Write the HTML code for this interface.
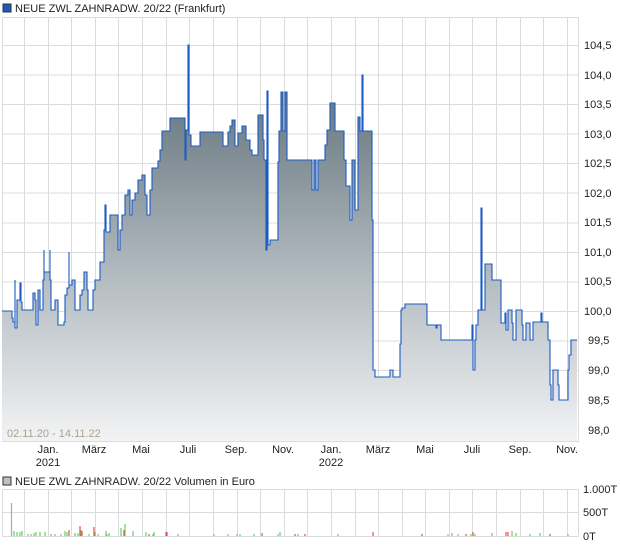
<!DOCTYPE html>
<html><head><meta charset="utf-8"><style>
body{margin:0;background:#fff;width:620px;height:546px;overflow:hidden;font-family:"Liberation Sans",sans-serif;}
svg{position:absolute;left:0;top:0}
text{font-family:"Liberation Sans",sans-serif;font-size:11px;fill:#222}
</style></head><body>
<svg width="620" height="546" viewBox="0 0 620 546">
<defs>
<linearGradient id="g" x1="0" y1="100" x2="0" y2="441" gradientUnits="userSpaceOnUse">
<stop offset="0" stop-color="#6a7981"/><stop offset="0.55" stop-color="#b7bfc4"/><stop offset="1" stop-color="#f2f3f5"/>
</linearGradient>
</defs>
<rect x="3" y="4" width="8" height="8" fill="#1c5bc4" stroke="#333" stroke-width="1"/>
<text x="15" y="12">NEUE ZWL ZAHNRADW. 20/22 (Frankfurt)</text>
<g stroke="#dcdcdc" stroke-width="1" fill="none">
<rect x="2.5" y="17.5" width="576" height="424"/>
<path d="M2 45.5H578M2 75H578M2 104.5H578M2 134H578M2 163.5H578M2 193H578M2 223H578M2 252.5H578M2 282H578M2 311.5H578M2 341H578M2 370.5H578M2 400H578M2 430H578"/>
<path d="M24.5 17V441M48.5 17V441M71.5 17V441M95.5 17V441M118.5 17V441M142.5 17V441M166.5 17V441M189.5 17V441M213.5 17V441M237.5 17V441M260.5 17V441M284.5 17V441M307.5 17V441M331.5 17V441M355.5 17V441M378.5 17V441M402.5 17V441M425.5 17V441M449.5 17V441M472.5 17V441M496.5 17V441M520.5 17V441M543.5 17V441M567.5 17V441"/>
</g>
<path fill="url(#g)" stroke="none" d="M2 441 V311 H12 V318 H13 V322 H15 V280 V328 H17 V300 H19 V300 H20 V283 H21 V302 H22 V310 H33 V293 H35 V300 H36 V325 H38 V290 H40 V310 H43 V280 H44 V250 V272 H50 V250 V280 H51 V310 H55 V300 H58 V325 H64 V322 H65 V295 H67 V288 H69 V252 V285 H72 V280 H75 V310 H80 V295 H82 V290 H84 V272 H87 V290 H88 V310 H93 V290 H95 V280 H100 V262 H104 V230 H105 V205 H106 V232 H110 V215 H115 V215 H118 V250 H120 V230 H122 V215 H125 V195 H128 V190 H130 V215 H132 V200 H135 V193 H138 V180 H142 V175 H145 V195 H147 V215 H150 V190 H152 V168 H158 V161 H160 V150 H162 V131 H170 V118 H172 V118 H185 V160 H186 V130 H188 V45 H189 V135 H191 V146 H192 V146 H200 V132 H223 V146 H228 V132 H230 V126 H232 V120 H235 V146 H238 V133 H242 V126 H246 V140 H250 V150 H252 V155 H258 V115 H263 V140 H264 V160 H266 V250 H267 V91 H268 V245 H270 V240 H278 V162 H279 V131 H281 V92 H283 V131 H285 V92 H287 V160 H312 V190 H314 V160 H316 V190 H318 V160 H325 V145 H327 V130 H330 V103 H335 V131 H338 V131 H344 V160 H346 V186 H350 V220 H352 V160 H355 V210 H358 V117 H360 V131 H362 V75 H363 V131 H372 V220 H373 V370 H375 V377 H377 V377 H390 V370 H393 V377 H400 V344 H401 V310 H402 V308 H405 V304 H412 V304 H427 V325 H428 V325 H436 V328 H437 V325 H441 V340 H458 V340 H472 V325 H473 V370 H475 V340 H476 V325 H478 V310 H481 V208 H482 V310 H485 V264 H488 V264 H492 V280 H497 V280 H501 V323 H505 V313 H506 V330 H508 V310 H512 V323 H513 V340 H516 V310 H519 V310 H522 V325 H523 V340 H526 V323 H530 V340 H533 V322 H537 V322 H541 V313 H542 V322 H548 V340 H550 V385 H551 V400 H553 V370 H558 V385 H559 V400 H568 V370 H569 V355 H571 V340 H577 V441 Z"/>
<path fill="none" stroke="#1c5bc4" stroke-width="1.1" d="M2 311 H12 V318 H13 V322 H15 V280 V328 H17 V300 H19 V300 H20 V283 H21 V302 H22 V310 H33 V293 H35 V300 H36 V325 H38 V290 H40 V310 H43 V280 H44 V250 V272 H50 V250 V280 H51 V310 H55 V300 H58 V325 H64 V322 H65 V295 H67 V288 H69 V252 V285 H72 V280 H75 V310 H80 V295 H82 V290 H84 V272 H87 V290 H88 V310 H93 V290 H95 V280 H100 V262 H104 V230 H105 V205 H106 V232 H110 V215 H115 V215 H118 V250 H120 V230 H122 V215 H125 V195 H128 V190 H130 V215 H132 V200 H135 V193 H138 V180 H142 V175 H145 V195 H147 V215 H150 V190 H152 V168 H158 V161 H160 V150 H162 V131 H170 V118 H172 V118 H185 V160 H186 V130 H188 V45 H189 V135 H191 V146 H192 V146 H200 V132 H223 V146 H228 V132 H230 V126 H232 V120 H235 V146 H238 V133 H242 V126 H246 V140 H250 V150 H252 V155 H258 V115 H263 V140 H264 V160 H266 V250 H267 V91 H268 V245 H270 V240 H278 V162 H279 V131 H281 V92 H283 V131 H285 V92 H287 V160 H312 V190 H314 V160 H316 V190 H318 V160 H325 V145 H327 V130 H330 V103 H335 V131 H338 V131 H344 V160 H346 V186 H350 V220 H352 V160 H355 V210 H358 V117 H360 V131 H362 V75 H363 V131 H372 V220 H373 V370 H375 V377 H377 V377 H390 V370 H393 V377 H400 V344 H401 V310 H402 V308 H405 V304 H412 V304 H427 V325 H428 V325 H436 V328 H437 V325 H441 V340 H458 V340 H472 V325 H473 V370 H475 V340 H476 V325 H478 V310 H481 V208 H482 V310 H485 V264 H488 V264 H492 V280 H497 V280 H501 V323 H505 V313 H506 V330 H508 V310 H512 V323 H513 V340 H516 V310 H519 V310 H522 V325 H523 V340 H526 V323 H530 V340 H533 V322 H537 V322 H541 V313 H542 V322 H548 V340 H550 V385 H551 V400 H553 V370 H558 V385 H559 V400 H568 V370 H569 V355 H571 V340 H577"/>
<text x="7" y="437" style="fill:#b0a08a;font-size:11px">02.11.20 - 14.11.22</text>
<g text-anchor="start">
<text x="584" y="49">104,5</text><text x="584" y="79">104,0</text><text x="584" y="108">103,5</text><text x="584" y="138">103,0</text><text x="584" y="167">102,5</text><text x="584" y="197">102,0</text><text x="584" y="226">101,5</text><text x="584" y="256">101,0</text><text x="584" y="285">100,5</text><text x="584" y="315">100,0</text><text x="588" y="344">99,5</text><text x="588" y="374">99,0</text><text x="588" y="404">98,5</text><text x="588" y="434">98,0</text>
</g>
<g text-anchor="middle">
<text x="48" y="453">Jan.</text><text x="48" y="466">2021</text>
<text x="94" y="453">März</text><text x="141" y="453">Mai</text><text x="188" y="453">Juli</text><text x="236" y="453">Sep.</text><text x="283" y="453">Nov.</text>
<text x="331" y="453">Jan.</text><text x="331" y="466">2022</text>
<text x="378" y="453">März</text><text x="425" y="453">Mai</text><text x="472" y="453">Juli</text><text x="520" y="453">Sep.</text><text x="567" y="453">Nov.</text>
</g>
<rect x="3" y="477" width="8" height="8" fill="#c0c0c0" stroke="#333" stroke-width="1"/>
<text x="15" y="485">NEUE ZWL ZAHNRADW. 20/22 Volumen in Euro</text>
<g stroke="#dcdcdc" stroke-width="1" fill="none">
<path d="M2 489.5H578M2 512.5H578M2 536.5H578M2.5 489V537M578.5 489V537"/>
<path d="M24.5 489V537M48.5 489V537M71.5 489V537M95.5 489V537M118.5 489V537M142.5 489V537M166.5 489V537M189.5 489V537M213.5 489V537M237.5 489V537M260.5 489V537M284.5 489V537M307.5 489V537M331.5 489V537M355.5 489V537M378.5 489V537M402.5 489V537M425.5 489V537M449.5 489V537M472.5 489V537M496.5 489V537M520.5 489V537M543.5 489V537M567.5 489V537"/>
</g>
<g stroke-width="1.2">
<path stroke="#aaa" d="M11.5 536V503M28 536V534M31 536V534M55 536V534M61 536V534M75 536V533M89 536V534M98 536V534M107 536V534M214 536V534M228 536V534M278 536V534M448 536V534M458 536V534"/>
<path stroke="#5cd65c" d="M14 536V531M17 536V532M20 536V532M22 536V531M34 536V533M36 536V532M40 536V532M45 536V532M51 536V534M65 536V531M67 536V532M75 536V534M78 536V533M81 536V530M95 536V532M106 536V531M109 536V533M121 536V528M125 536V524M133 536V531M146 536V532M153 536V534M154 536V532M178 536V534M237 536V534M240 536V534M254 536V534M280 536V532M298 536V534M338 536V534M452 536V533M471 536V534M475 536V534M492 536V533M512 536V531M516 536V533M530 536V534M540 536V533M568 536V534"/>
<path stroke="#e05050" d="M69 536V530M80 536V526M82 536V531M94 536V527M124 536V530M149 536V534M166 536V532M167 536V532M262 536V533M295 536V534M305 536V534M373 536V532M422 536V534M466 536V534M473 536V532M506 536V532M508 536V532M550 536V534"/>
</g>
<g><text x="583" y="493">1.000T</text><text x="583" y="516">500T</text><text x="583" y="540">0T</text></g>
</svg>
</body></html>
